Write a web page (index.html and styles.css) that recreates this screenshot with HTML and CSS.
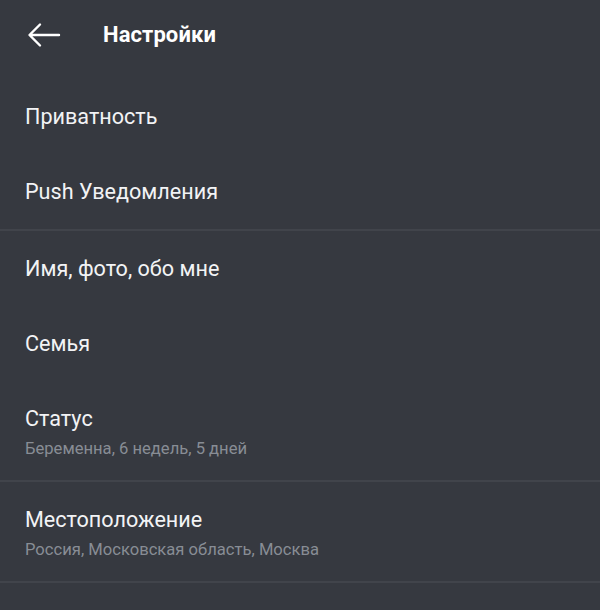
FILE: index.html
```html
<!DOCTYPE html>
<html lang="ru">
<head>
<meta charset="utf-8">
<link rel="stylesheet" href="styles.css">
</head>
<body>
<div class="screen">
  <header class="topbar">
    <svg class="back" width="34" height="26" viewBox="0 0 34 26">
      <path d="M32 13H3M13 2.5L2.5 13L13 23.5" fill="none" stroke="#ffffff" stroke-width="2.4" stroke-linecap="round" stroke-linejoin="round"/>
    </svg>
    <h1 class="title">Настройки</h1>
  </header>
  <section class="group">
    <div class="row"><div class="row-title">Приватность</div></div>
    <div class="row"><div class="row-title">Push Уведомления</div></div>
  </section>
  <section class="group">
    <div class="row"><div class="row-title">Имя, фото, обо мне</div></div>
    <div class="row"><div class="row-title">Семья</div></div>
    <div class="row row-two"><div class="row-title">Статус</div><div class="row-sub">Беременна, 6 недель, 5 дней</div></div>
  </section>
  <section class="group">
    <div class="row row-two"><div class="row-title">Местоположение</div><div class="row-sub">Россия, Московская область, Москва</div></div>
  </section>
</div>
</body>
</html>
```
FILE: styles.css
```css
html, body {
  margin: 0;
  padding: 0;
  background: #363940;
}
.screen {
  width: 600px;
  height: 610px;
  overflow: hidden;
  background: #363940;
  font-family: Roboto, "Noto Sans", sans-serif;
  color: #ffffff;
}
.topbar {
  height: 70px;
  display: flex;
  align-items: center;
  padding-left: 27px;
  box-sizing: border-box;
}
.back {
  display: block;
}
.title {
  margin: 0 0 0 42px;
  font-size: 22px;
  font-weight: 700;
  line-height: 24px;
  letter-spacing: 0.1px;
}
.group {
  border-bottom: 2px solid #41444b;
}
.group:first-of-type {
  padding-top: 9px;
}
.row {
  padding: 26px 25px 25px;
}
.row-two {
  padding-bottom: 21px;
}
.row-title {
  font-size: 21.6px;
  line-height: 24px;
  color: #f2f3f5;
}
.row-sub {
  margin-top: 8px;
  font-size: 16.6px;
  line-height: 20px;
  color: #888d95;
}
```
